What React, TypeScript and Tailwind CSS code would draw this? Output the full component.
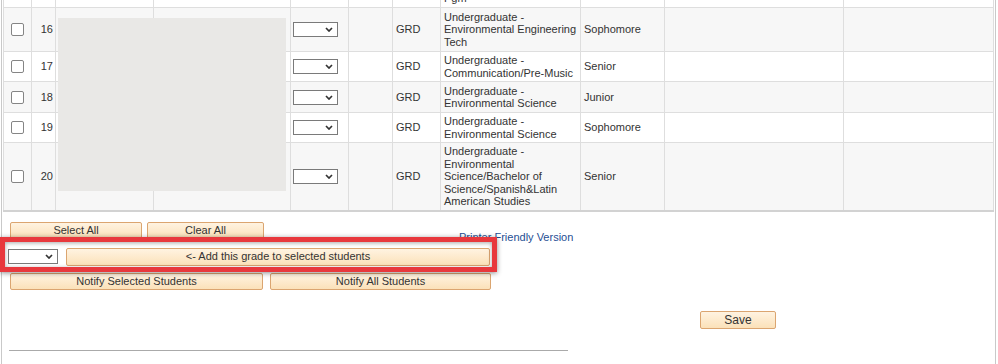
import React from "react";

type Row = { n: number | null; prog: string[]; year: string; h: string; shade: boolean };

const rows: Row[] = [
  { n: null, prog: ["Undergraduate -", "Education/Teacher Ed", "Pgm"], year: "", h: "h-[44px]", shade: false },
  { n: 16, prog: ["Undergraduate -", "Environmental Engineering", "Tech"], year: "Sophomore", h: "h-[44px]", shade: true },
  { n: 17, prog: ["Undergraduate -", "Communication/Pre-Music"], year: "Senior", h: "h-[30px]", shade: false },
  { n: 18, prog: ["Undergraduate -", "Environmental Science"], year: "Junior", h: "h-[31px]", shade: true },
  { n: 19, prog: ["Undergraduate -", "Environmental Science"], year: "Sophomore", h: "h-[30px]", shade: false },
  {
    n: 20,
    prog: ["Undergraduate -", "Environmental", "Science/Bachelor of", "Science/Spanish&Latin", "American Studies"],
    year: "Senior",
    h: "h-[68px]",
    shade: true,
  },
];

function Dropdown({ className }: { className: string }) {
  return (
    <div className={`flex items-center justify-end border border-[#7a7a7a] bg-white pr-[4px] ${className}`}>
      <svg width="8" height="5" viewBox="0 0 8 5">
        <path d="M1 1l3 3 3-3" stroke="#333" strokeWidth="1.7" fill="none" />
      </svg>
    </div>
  );
}

function Btn({ label, className }: { label: string; className: string }) {
  return (
    <button
      className={`flex shrink-0 items-center justify-center rounded-[2px] border border-[#dba570] bg-linear-to-b from-[#fff3e1] to-[#fbe1b9] text-[11px] text-[#333] ${className}`}
    >
      {label}
    </button>
  );
}

export default function App() {
  const cell = "border border-[#dedede] align-middle";
  return (
    <div className="relative h-[364px] overflow-hidden bg-white font-['Liberation_Sans',Arial,sans-serif] text-[11px] text-[#333]">
      <div className="ml-[1px] flex min-h-[364px] w-[995px] flex-col border-x border-[#c9c9c9]">
        <table className="ml-[1px] mt-[-37px] w-[991px] table-fixed border-collapse border-b-2 border-b-[#d2d2d2] leading-[12.5px]">
          <colgroup>
            <col className="w-[28px]" />
            <col className="w-[24px]" />
            <col className="w-[98px]" />
            <col className="w-[137px]" />
            <col className="w-[58px]" />
            <col className="w-[44px]" />
            <col className="w-[48px]" />
            <col className="w-[140px]" />
            <col className="w-[84px]" />
            <col className="w-[179px]" />
            <col className="w-[150px]" />
          </colgroup>
          <tbody>
            {rows.map((r, i) => (
              <tr key={i} className={`${r.h} ${r.shade ? "bg-[#f7f7f7]" : "bg-white"}`}>
                <td className={cell}>
                  {r.n && <div className="mx-auto h-[13px] w-[13px] rounded-[2px] border border-[#858585] bg-white" />}
                </td>
                <td className={`${cell} pr-[2px] text-right text-[#333]`}>{r.n}</td>
                <td className={cell} />
                <td className={cell} />
                <td className={`${cell} pl-[2px]`}>{r.n && <Dropdown className="h-[15px] w-[45px]" />}</td>
                <td className={cell} />
                <td className={`${cell} pl-[3px]`}>{r.n && "GRD"}</td>
                <td className={`${cell} pl-[3px]`}>
                  {r.prog.map((l) => (
                    <div key={l} className="whitespace-nowrap">
                      {l}
                    </div>
                  ))}
                </td>
                <td className={`${cell} pl-[3px]`}>{r.year}</td>
                <td className={cell} />
                <td className={cell} />
              </tr>
            ))}
          </tbody>
        </table>

        <div className="ml-[8px] mt-[10px] flex h-[17px] items-start">
          <Btn label="Select All" className="h-[17px] w-[132px]" />
          <Btn label="Clear All" className="ml-[5px] h-[17px] w-[117px]" />
          <a className="ml-[195px] mt-[9px] whitespace-nowrap leading-[13px] text-[#1f4e93]">Printer Friendly Version</a>
        </div>

        <div className="ml-[6px] mt-[9px] flex items-center">
          <Dropdown className="h-[15px] w-[50px]" />
          <Btn label="<- Add this grade to selected students" className="ml-[8px] h-[18px] w-[424px]" />
        </div>

        <div className="ml-[8px] mt-[7px] flex">
          <Btn label="Notify Selected Students" className="h-[17px] w-[253px]" />
          <Btn label="Notify All Students" className="ml-[7px] h-[17px] w-[221px]" />
        </div>

        <div className="mt-[21px] flex">
          <Btn label="Save" className="ml-[698px] h-[18px] w-[76px] text-[12px]" />
        </div>

        <div className="ml-[7px] mt-[21px] w-[559px] border-t border-[#aaaaaa]" />
      </div>

      <div className="absolute left-[58px] top-[18px] h-[173px] w-[228px] bg-[#e9e8e6]" />

      <div className="absolute left-0 top-[237px] h-[35px] w-[497px] border-[5px] border-[#e8383d] shadow-[0_1px_5px_rgba(0,0,0,0.45),inset_0_1px_4px_rgba(0,0,0,0.35)]" />
    </div>
  );
}
